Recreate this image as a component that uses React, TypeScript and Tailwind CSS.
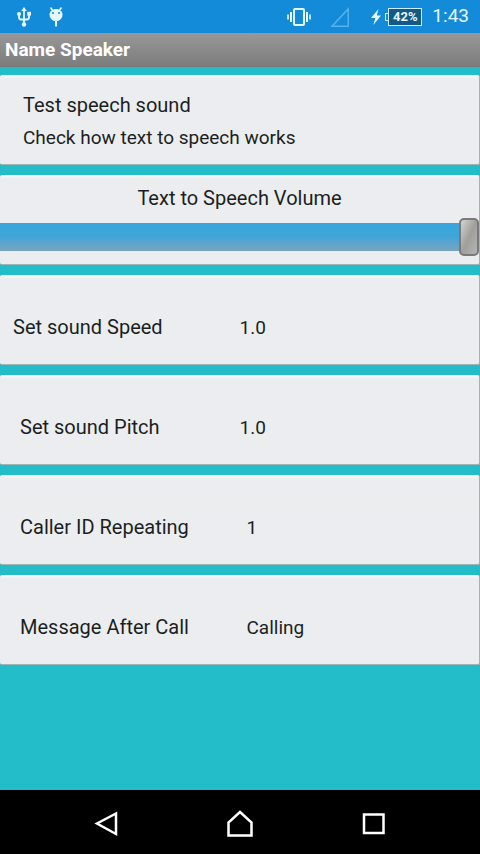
import { useState } from 'react'
import type { ReactNode } from 'react'

const surface =
  'block w-full rounded-xs border-b border-r border-[#a3b3b5] bg-linear-to-b from-[#f6fafb] via-[#ebedef] via-5% to-[#ebeef0] text-[#1b1f22]'

const settings = [
  { label: 'Set sound Speed', value: '1.0', labelClass: 'pl-[13px]', valueClass: 'pl-0' },
  { label: 'Set sound Pitch', value: '1.0', labelClass: 'pl-5', valueClass: 'pl-0' },
  { label: 'Caller ID Repeating', value: '1', labelClass: 'pl-5', valueClass: 'pl-[7px]' },
  { label: 'Message After Call', value: 'Calling', labelClass: 'pl-5', valueClass: 'pl-[7px]' },
]

function StatusBar() {
  return (
    <div className="flex h-[33px] items-center bg-[#138bd8] pl-4 pr-[11px] text-[#e4f8fc]">
      <svg className="h-5 w-4" viewBox="0 0 16 20" fill="none" stroke="currentColor" strokeWidth="1.8">
        <path d="M8 3v13M3 8v2q0 2.500 2 2.500h6q2 0 2-2.500V7" />
        <path d="M8 0l2.800 4H5.200z" fill="currentColor" stroke="none" />
        <circle cx="8" cy="17.500" r="2.200" fill="currentColor" stroke="none" />
        <circle cx="3" cy="7" r="2" fill="currentColor" stroke="none" />
        <path d="M11.200 4.800h3.800v3.800h-3.800z" fill="currentColor" stroke="none" />
      </svg>
      <svg className="ml-4 h-5 w-4" viewBox="0 0 16 20">
        <path d="M2.500 0.500l3 4M13.500 0.500l-3 4" stroke="currentColor" strokeWidth="1.500" />
        <path d="M8 2c4 0 6.500 2.500 6.500 5.800 0 3-1.800 5-4.500 6.200H6C3.300 12.800 1.500 10.800 1.500 7.800 1.500 4.500 4 2 8 2z" fill="currentColor" />
        <path d="M7 13h2v6.500H7z" fill="currentColor" />
        <circle cx="5" cy="6" r="1" fill="#138bd8" />
        <circle cx="11" cy="6" r="1" fill="#138bd8" />
      </svg>
      <svg className="ml-auto h-5 w-6" viewBox="0 0 24 20" fill="none" stroke="currentColor" strokeWidth="2">
        <rect x="7" y="2" width="10" height="16" rx="1" />
        <path d="M4 5v10M20 5v10" />
        <path d="M1 7.500v5M23 7.500v5" strokeWidth="1.600" />
      </svg>
      <svg className="ml-5 h-5 w-[18px]" viewBox="0 0 18 20" fill="none" stroke="#58b3ea" strokeWidth="1.500">
        <path d="M17.200 2v17.200H1z" />
      </svg>
      <svg className="ml-[22px] h-4 w-[10px]" viewBox="0 0 10 16" fill="currentColor">
        <path d="M7.500 0L0 9h4.300L2.300 16 10 6.500H5.800z" />
      </svg>
      <span className="ml-1 h-2 w-[3px] border-y border-l border-[#c9effa]" />
      <span className="flex h-[18px] w-[34px] items-center justify-center border border-[#c9effa] bg-[#155a86] text-[13px] font-bold">
        42%
      </span>
      <span className="ml-[10px] text-[19px]">1:43</span>
    </div>
  )
}

function NavButton({ label, children }: { label: string; children: ReactNode }) {
  return (
    <button type="button" aria-label={label} className="flex h-16 w-16 items-center justify-center">
      <svg className="h-8 w-8" viewBox="0 0 32 32" fill="none" stroke="white" strokeWidth="2.500">
        {children}
      </svg>
    </button>
  )
}

export default function App() {
  const [volume, setVolume] = useState(100)

  return (
    <div className="flex min-h-screen flex-col bg-[#23bdca] font-[Roboto,'Liberation_Sans',sans-serif]">
      <StatusBar />
      <header className="h-[34px] border-b border-[#777] bg-linear-to-b from-[#989898] to-[#7d7d7d] px-[5px]">
        <h1 className="text-[19px] leading-[34px] font-bold text-white">Name Speaker</h1>
      </header>

      <main className="flex flex-1 flex-col gap-[10px] pt-2 pb-4">
        <button type="button" className={`${surface} h-[90px] px-[23px] pt-1 text-left`}>
          <span className="block text-xl leading-8">Test speech sound</span>
          <span className="block text-[19px] leading-[34px]">Check how text to speech works</span>
        </button>

        <section className={`${surface} h-[90px] pt-2`}>
          <label htmlFor="volume" className="block text-center text-xl leading-[30px]">
            Text to Speech Volume
          </label>
          <input
            id="volume"
            type="range"
            min={0}
            max={100}
            value={volume}
            onChange={(e) => setVolume(Number(e.target.value))}
            className="mt-1 block h-[40px] w-full appearance-none bg-transparent [&::-webkit-slider-runnable-track]:h-7 [&::-webkit-slider-runnable-track]:bg-linear-to-b [&::-webkit-slider-runnable-track]:from-[#38a5dd] [&::-webkit-slider-runnable-track]:via-[#40a5d8] [&::-webkit-slider-runnable-track]:to-[#77a3bd] [&::-webkit-slider-thumb]:-mt-[5px] [&::-webkit-slider-thumb]:h-[38px] [&::-webkit-slider-thumb]:w-5 [&::-webkit-slider-thumb]:appearance-none [&::-webkit-slider-thumb]:rounded-[5px] [&::-webkit-slider-thumb]:border-2 [&::-webkit-slider-thumb]:border-[#77797b] [&::-webkit-slider-thumb]:bg-linear-to-br [&::-webkit-slider-thumb]:from-[#d4d4d4] [&::-webkit-slider-thumb]:via-[#a09f9b] [&::-webkit-slider-thumb]:to-[#b4b4b4]"
          />
        </section>

        {settings.map((item) => (
          <button key={item.label} type="button" className={`${surface} h-[90px] pt-4 text-left`}>
            <span className="grid grid-cols-2 items-baseline">
              <span className={`text-xl ${item.labelClass}`}>{item.label}</span>
              <span className={`text-[19px] ${item.valueClass}`}>{item.value}</span>
            </span>
          </button>
        ))}
      </main>

      <nav className="flex h-16 items-center justify-center gap-[70px] bg-black">
        <NavButton label="Back">
          <path d="M26 7.500v20.500L7 17.500z" />
        </NavButton>
        <NavButton label="Home">
          <path d="M16 6l11.500 10.500v13h-23v-13z" />
        </NavButton>
        <NavButton label="Recent apps">
          <rect x="6" y="8.500" width="19.500" height="18.500" />
        </NavButton>
      </nav>
    </div>
  )
}
